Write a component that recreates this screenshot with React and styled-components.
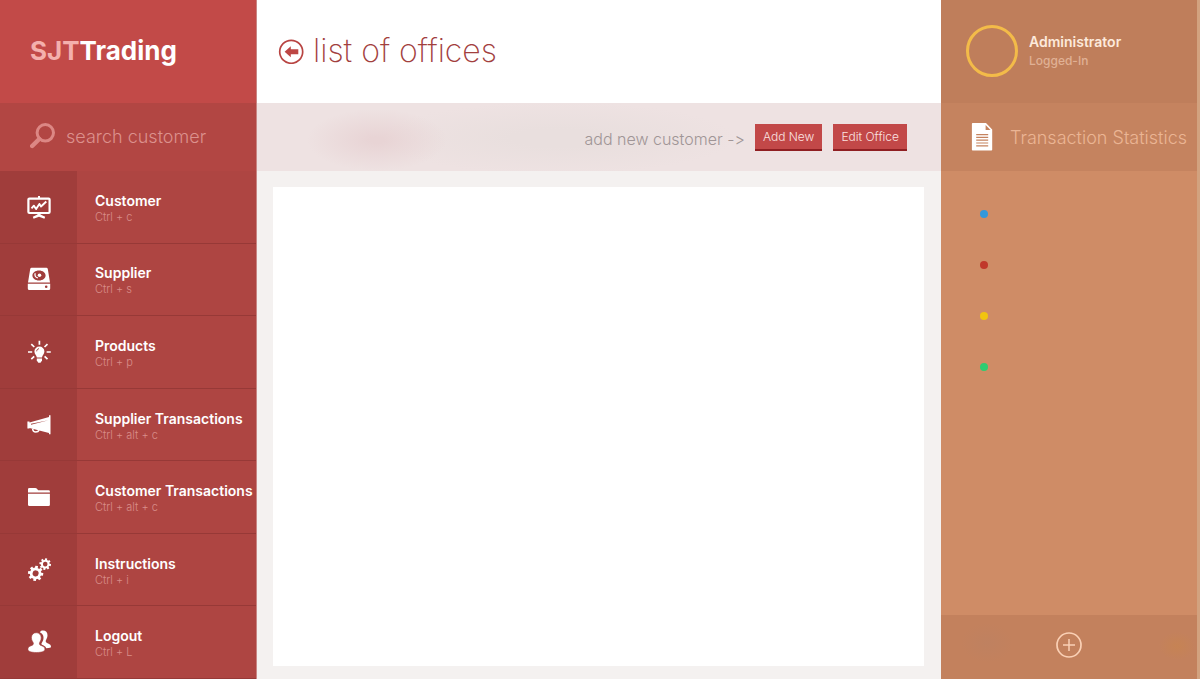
import React from "react";
import styled, { createGlobalStyle } from "styled-components";

const GlobalStyle = createGlobalStyle`
  *, *::before, *::after { box-sizing: border-box; }
  body { margin: 0; font-family: Inter, "Liberation Sans", sans-serif; background: #f4f1f0; }
  button, input { font-family: inherit; }
  h1, h2, p, ul { margin: 0; padding: 0; font-weight: inherit; }
  ul { list-style: none; }
`;

const Shell = styled.div`
  display: grid;
  grid-template-columns: 257px minmax(0, 1fr) 259px;
  min-height: 100vh;
`;

const Sidebar = styled.aside`
  display: flex;
  flex-direction: column;
  background: #ae4542;
  border-right: 1px solid #c98684;
`;

const Brand = styled.h1`
  display: flex;
  align-items: center;
  height: 103px;
  padding: 0 0 2px 30px;
  background: #c24a48;
  color: #fff;
  font-size: 26px;
  font-weight: 700;
`;

const BrandPrefix = styled.span`
  color: #f4b0ad;
`;

const Search = styled.label`
  display: flex;
  align-items: center;
  gap: 10px;
  height: 68px;
  padding: 0 20px 2px 30px;
  background: #b24643;
`;

const SearchInput = styled.input`
  flex: 1;
  min-width: 0;
  padding: 0;
  border: 0;
  outline: 0;
  background: transparent;
  color: #fff;
  font-size: 18px;
  font-weight: 300;
  &::placeholder { color: #dc918d; opacity: 1; }
`;

const Menu = styled.nav`
  flex: 1;
  display: flex;
  flex-direction: column;
`;

const MenuItem = styled.a`
  flex: 1;
  display: flex;
  min-height: 72px;
  border-bottom: 1px solid #973937;
  color: #fff;
  text-decoration: none;
  white-space: nowrap;
`;

const MenuIcon = styled.span`
  display: flex;
  align-items: center;
  justify-content: center;
  width: 77px;
  background: #a03d3b;
`;

const MenuText = styled.span`
  display: flex;
  flex-direction: column;
  justify-content: center;
  padding: 3px 0 0 18px;
`;

const MenuTitle = styled.span`
  font-size: 14px;
  font-weight: 600;
  line-height: 18px;
`;

const Shortcut = styled.span`
  color: #d98e8a;
  font-size: 11px;
  font-weight: 300;
  line-height: 15px;
`;

const Main = styled.main`
  display: flex;
  flex-direction: column;
  background: #f4f1f0;
`;

const PageHeader = styled.header`
  display: flex;
  align-items: center;
  gap: 9px;
  height: 103px;
  padding: 0 0 2px 21px;
  background: #fff;
`;

const IconButton = styled.button`
  display: flex;
  padding: 0;
  border: 0;
  background: transparent;
  cursor: pointer;
`;

const PageTitle = styled.h2`
  color: #a2403e;
  font-size: 32px;
  font-weight: 200;
`;

const Toolbar = styled.div`
  display: flex;
  align-items: center;
  justify-content: flex-end;
  height: 68px;
  padding: 0 34px 0 0;
  background:
    radial-gradient(70px 31px at 120px 37px, #e8d4d5 10%, transparent),
    radial-gradient(180px 36px at 300px 35px, #e9dfde 25%, transparent),
    #eee2e2;
`;

const Hint = styled.p`
  padding-top: 3px;
  margin-right: 10px;
  color: #a09596;
  font-size: 16px;
  font-weight: 300;
  font-feature-settings: "calt" 0;
`;

const ActionButton = styled.button`
  height: 27px;
  padding: 0 8px;
  border: 0;
  border-bottom: 2px solid #8f1f22;
  background: #c24848;
  color: #fbe3e2;
  font-size: 12px;
  font-weight: 300;
  & + & { margin-left: 11px; }
`;

const Board = styled.section`
  flex: 1;
  margin: 16px 17px 13px 16px;
  background: #fff;
`;

const StatsPanel = styled.aside`
  display: flex;
  flex-direction: column;
  background: #cf8c66;
  border-right: 3px solid #d2a27f;
`;

const Profile = styled.div`
  display: flex;
  align-items: center;
  gap: 11px;
  height: 103px;
  padding: 0 0 1px 25px;
  background: #bf7e5b;
`;

const Avatar = styled.div`
  width: 52px;
  height: 52px;
  border: 3px solid #f3bb49;
  border-radius: 50%;
`;

const UserName = styled.p`
  color: #fdeadb;
  font-size: 14px;
  font-weight: 600;
  line-height: 19px;
`;

const UserState = styled.p`
  color: #e0b195;
  font-size: 12px;
  font-weight: 500;
  line-height: 19px;
`;

const StatsHeader = styled.div`
  display: flex;
  align-items: center;
  gap: 17px;
  height: 68px;
  padding-left: 30px;
  background: #c5835f;
  white-space: nowrap;
`;

const StatsTitle = styled.h2`
  color: #ebb594;
  font-size: 18px;
  font-weight: 300;
`;

const Legend = styled.ul`
  flex: 1;
  display: flex;
  flex-direction: column;
  gap: 43px;
  padding: 39px 0 39px 39px;
`;

const LegendDot = styled.li`
  width: 8px;
  height: 8px;
  border-radius: 50%;
  background: ${(p) => p.$color};
`;

const StatsFooter = styled.footer`
  display: flex;
  align-items: center;
  justify-content: center;
  height: 64px;
  padding-bottom: 4px;
  background:
    radial-gradient(26px 20px at 46px 28px, #bf8160, transparent),
    radial-gradient(18px 14px at 236px 31px, #c68354, transparent),
    #c3815d;
`;

const SearchIcon = () => (
  <svg width="26" height="26" viewBox="0 0 26 26" fill="none" stroke="#dc8784" aria-hidden="true">
    <circle cx="15.3" cy="9.8" r="8.2" strokeWidth="3" />
    <path d="M9.3 16L2.2 23" strokeWidth="4.4" strokeLinecap="round" />
  </svg>
);

const Glyph = ({ children }) => (
  <svg width="24" height="24" viewBox="0 0 24 24" fill="#fff" aria-hidden="true">
    {children}
  </svg>
);

const BoardIcon = () => (
  <Glyph>
    <path d="M11 1h2v2h-2z" />
    <rect x="1.4" y="3.600" width="21.2" height="14.4" rx="1" fill="none" stroke="#fff" strokeWidth="2.2" />
    <path d="M4.5 13.300l2.400-2.600 2.200 3.400 3.300-5.200 1.600 2.600 5.300-5" fill="none" stroke="#fff" strokeWidth="1.900" strokeLinejoin="round" />
    <path d="M10.500 18.600h3v.8l4.700 2.400-.8 1.900-5.400-1.900-5.400 1.900-.8-1.900 4.700-2.400z" />
  </Glyph>
);

const DriveIcon = () => (
  <Glyph>
    <path fillRule="evenodd" d="M4.600 .8h14.800a1.500 1.500 0 0 1 1.400 1.100L23 15.600H1L3.200 1.900A1.500 1.500 0 0 1 4.600 .8zM12 3.400c-3.800 0-6.600 2.200-6.600 5s2.800 5 6.600 5 6.600-2.200 6.600-5-2.800-5-6.600-5z" />
    <circle cx="12.500" cy="8.300" r="1.800" />
    <path d="M8.300 6.300c-1 2 .2 4.200 2.600 4.600" fill="none" stroke="#fff" strokeWidth="1.300" />
    <path fillRule="evenodd" d="M.8 16.700h22.400v4.800a1.500 1.500 0 0 1-1.500 1.500H2.300a1.500 1.500 0 0 1-1.500-1.500zM19.200 18.500a1.300 1.300 0 1 0 0 2.600 1.300 1.300 0 0 0 0-2.600z" />
  </Glyph>
);

const BulbIcon = () => (
  <Glyph>
    <path d="M12.400 6.600a5 5 0 0 0-5 5c0 2.800 2.300 3.600 2.400 6h5.200c.1-2.400 2.400-3.200 2.400-6a5 5 0 0 0-5-5z" />
    <path d="M9.800 18.400h5.200v2.200l-1.500 2.200h-2.200l-1.500-2.200z" />
    <path d="M9.700 11.300c0-1.400.9-2.400 2.200-2.600" fill="none" stroke="#a03d3b" strokeWidth="1" />
    <path d="M12.400 .8v4M1 12h4.200M19.600 12h4.200M4.300 4.200l3 2.800M20.500 4.200l-3 2.800M4.300 19.200l2.900-2.800M20.500 19.200l-2.900-2.800" stroke="#fff" strokeWidth="1.700" />
  </Glyph>
);

const MegaphoneIcon = () => (
  <Glyph>
    <path fillRule="evenodd" d="M22 2.300h1.500v19H22v-1.300L2.500 15v.6H.4V8.500h2.100v1L22 4zM21.500 7.200L4 10.800v1z" />
    <path d="M5.600 15.800c.2 2.300 1.500 3.200 3.200 3.200 1.600 0 2.800-.7 3.400-1.800" fill="none" stroke="#fff" strokeWidth="1.500" />
  </Glyph>
);

const FolderIcon = () => (
  <Glyph>
    <path d="M1 7.600V4.300a1.300 1.300 0 0 1 1.300-1.300h6c.6 0 1 .2 1.400.6l1.500 1.700h10.400a1.300 1.300 0 0 1 1.300 1.300v1z" />
    <path d="M1 8.700h21.900v11a1.400 1.400 0 0 1-1.400 1.400H2.400A1.400 1.400 0 0 1 1 19.700z" />
  </Glyph>
);

const Gear = ({ x, y, r, turn }) => (
  <g transform={`translate(${x} ${y}) rotate(${turn})`} stroke="#fff" fill="none">
    <circle r={r * 0.58} strokeWidth={r * 0.36} />
    {[0, 45, 90, 135, 180, 225, 270, 315].map((a) => (
      <path key={a} d={`M0 ${-r * 0.65}V${-r}`} strokeWidth={r * 0.36} transform={`rotate(${a})`} />
    ))}
  </g>
);

const GearsIcon = () => (
  <Glyph>
    <Gear x={8.600} y={15.400} r={7.600} turn={8} />
    <Gear x={18.200} y={6.100} r={5.800} turn={10} />
  </Glyph>
);

const UsersIcon = () => (
  <Glyph>
    <path d="M12.800 2.300C13.600 1 14.700.6 16 .6c2.900 0 4.500 2 4.500 4.700 0 2.500-1.200 3.800-1.700 5.200-.5 1.700.6 2.300 2.400 3 1.900.8 2.800 1.700 2.800 3.300 0 1-1.500 1.400-4.700 1.400-1-2.100-2.700-2.800-4.300-3.400-.8-.4-.7-1.300 0-2.200 1-1.500 1.500-3 1.500-5 0-2.400-1.200-4.200-3.700-5.300z" />
    <path d="M9.200 2.700c3 0 5 2 5 5 0 2.500-1.200 3.800-1.700 5.200-.5 1.700.6 2.200 2.400 2.900 2 .8 3 1.700 3 3.400 0 2.200-3.200 3.300-8.500 3.300S.9 21.400.9 19.200c0-1.700 1-2.600 3-3.400 1.800-.7 2.900-1.200 2.400-2.900-.5-1.400-1.900-2.700-1.900-5.200 0-3 1.900-5 4.800-5z" stroke="#a03d3b" strokeWidth=".6" />
  </Glyph>
);

const BackIcon = () => (
  <svg width="26" height="26" viewBox="0 0 26 26" aria-hidden="true">
    <circle cx="13.200" cy="13.800" r="11.500" fill="none" stroke="#b84442" strokeWidth="1.700" />
    <path d="M6.600 13.800l6.200-5.500v3h7.500v5h-7.500v3z" fill="#bd4644" />
  </svg>
);

const DocumentIcon = () => (
  <svg width="22" height="28" viewBox="0 0 22 28" aria-hidden="true">
    <path d="M1.700 0H15l6.200 6.400v20.400a.8.8 0 0 1-.8.800H1.700a.8.800 0 0 1-.8-.8V.8a.8.800 0 0 1 .8-.8z" fill="#fff" />
    <path d="M14.600 2v4.900h4.900z" fill="#c5835f" />
    <path d="M5.200 11.600h12M5.200 14.400h12M5.200 17.200h12M5.200 20h12M5.200 22.800h12" stroke="#c5835f" strokeWidth="1.200" />
  </svg>
);

const PlusIcon = () => (
  <svg width="26" height="26" viewBox="0 0 26 26" fill="none" stroke="#fad0b5" aria-hidden="true">
    <circle cx="13" cy="13" r="12" strokeWidth="1.700" />
    <path d="M13 7v12M7 13h12" strokeWidth="1.500" />
  </svg>
);

const menuItems = [
  { title: "Customer", keys: "Ctrl + c", Icon: BoardIcon },
  { title: "Supplier", keys: "Ctrl + s", Icon: DriveIcon },
  { title: "Products", keys: "Ctrl + p", Icon: BulbIcon },
  { title: "Supplier Transactions", keys: "Ctrl + alt + c", Icon: MegaphoneIcon },
  { title: "Customer Transactions", keys: "Ctrl + alt + c", Icon: FolderIcon },
  { title: "Instructions", keys: "Ctrl + i", Icon: GearsIcon },
  { title: "Logout", keys: "Ctrl + L", Icon: UsersIcon },
];

const legendColors = ["#3498db", "#c0392b", "#f1c40f", "#2ecc71"];

export default function App() {
  return (
    <>
      <GlobalStyle />
      <Shell>
        <Sidebar>
          <Brand><BrandPrefix>SJT</BrandPrefix>Trading</Brand>
          <Search>
            <SearchIcon />
            <SearchInput type="text" placeholder="search customer" aria-label="search customer" />
          </Search>
          <Menu>
            {menuItems.map(({ title, keys, Icon }) => (
              <MenuItem key={title} href="#">
                <MenuIcon><Icon /></MenuIcon>
                <MenuText>
                  <MenuTitle>{title}</MenuTitle>
                  <Shortcut>{keys}</Shortcut>
                </MenuText>
              </MenuItem>
            ))}
          </Menu>
        </Sidebar>
        <Main>
          <PageHeader>
            <IconButton type="button" aria-label="Back"><BackIcon /></IconButton>
            <PageTitle>list of offices</PageTitle>
          </PageHeader>
          <Toolbar>
            <Hint>add new customer -&gt;</Hint>
            <ActionButton type="button">Add New</ActionButton>
            <ActionButton type="button">Edit Office</ActionButton>
          </Toolbar>
          <Board />
        </Main>
        <StatsPanel>
          <Profile>
            <Avatar />
            <div>
              <UserName>Administrator</UserName>
              <UserState>Logged-In</UserState>
            </div>
          </Profile>
          <StatsHeader>
            <DocumentIcon />
            <StatsTitle>Transaction Statistics</StatsTitle>
          </StatsHeader>
          <Legend>
            {legendColors.map((c) => <LegendDot key={c} $color={c} />)}
          </Legend>
          <StatsFooter>
            <IconButton type="button" aria-label="Add"><PlusIcon /></IconButton>
          </StatsFooter>
        </StatsPanel>
      </Shell>
    </>
  );
}
